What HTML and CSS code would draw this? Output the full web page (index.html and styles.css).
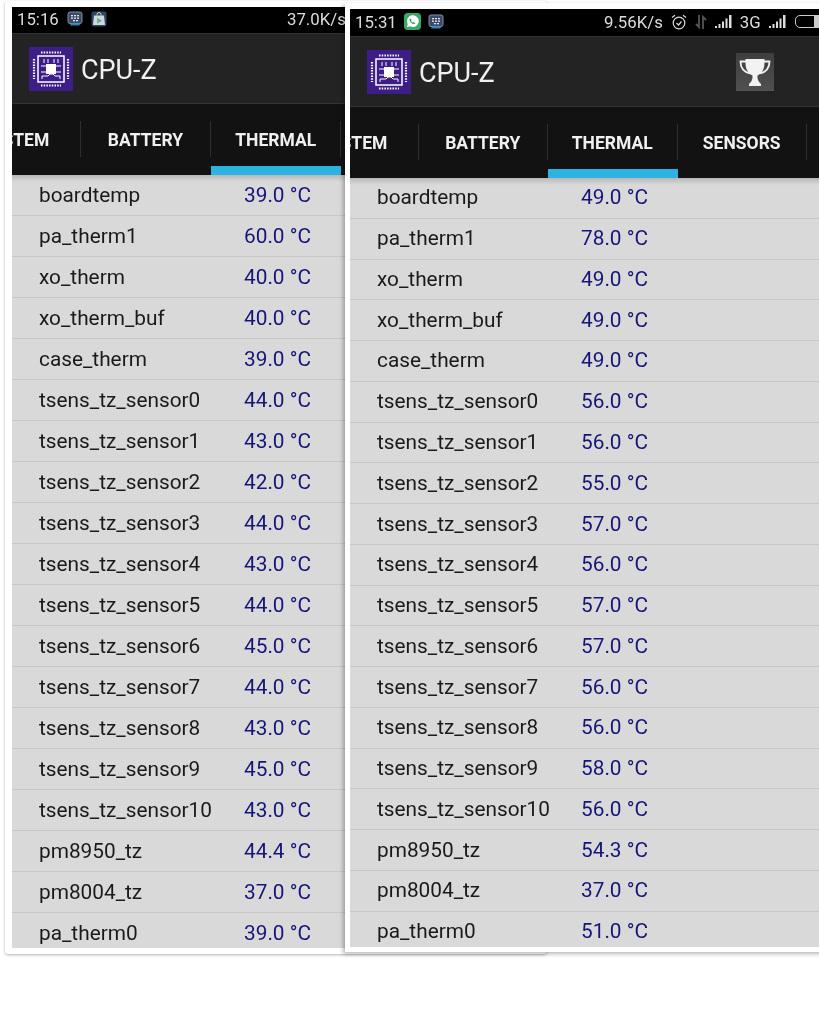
FILE: index.html
```html
<!DOCTYPE html>
<html lang="en">
<head>
<meta charset="utf-8">
<title>CPU-Z thermal comparison</title>
<link rel="stylesheet" href="styles.css">
</head>
<body>
<svg class="defs" width="0" height="0" aria-hidden="true">
  <symbol id="cpu" viewBox="0 0 44 44">
    <rect width="44" height="44" fill="#3c1e86"/>
    <g fill="none" stroke="#fff">
      <rect x="9" y="9" width="26" height="26" stroke-width="1.500"/>
      <path d="M15 16v-4M19 16v-4M25 16v-4M29 16v-4M12 19h5M32 19h-5M12 25h5M32 25h-5M13 32v-3h6l2-2h3l2 2h5v3" stroke-width="1"/>
    </g>
    <rect x="17" y="17" width="10" height="10" fill="#fff"/>
    <g stroke="#fff" stroke-width="2.200" stroke-dasharray="1.500 1.200">
      <path d="M12 5.500h20M12 38.500h20M5 12v20M39 12v20"/>
    </g>
  </symbol>
  <symbol id="bbm" viewBox="0 0 16 16">
    <rect x="1" y="1" width="14" height="11.500" rx="2" fill="#3b4a68" stroke="#7e8fa8"/>
    <path d="M3 14.500h9l2-2H4z" fill="#2e86b8"/>
    <g fill="#e6e6e6"><rect x="4" y="4" width="2" height="1.300"/><rect x="7" y="4" width="2" height="1.300"/><rect x="10" y="4" width="2" height="1.300"/><rect x="4" y="6.500" width="2" height="1.300"/><rect x="7" y="6.500" width="2" height="1.300"/><rect x="10" y="6.500" width="2" height="1.300"/><rect x="6" y="9" width="2" height="1.300"/><rect x="9" y="9" width="2" height="1.300"/></g>
  </symbol>
  <symbol id="play" viewBox="0 0 16 16">
    <rect x="0.500" y="0.500" width="15" height="15" rx="2" fill="#2d4561"/>
    <path d="M3 4.500h10l1 9.500H2z" fill="#cfd8dc"/>
    <path d="M6 4.500V3.500a2 2 0 0 1 4 0v1" fill="none" stroke="#cfd8dc"/>
    <path d="M6 7l5 2.800L6 12.600z" fill="#3aa9c9"/>
    <path d="M6 7l2.800 2.800L6 12.600z" fill="#7cb45a"/>
  </symbol>
  <symbol id="whatsapp" viewBox="0 0 18 18">
    <rect width="18" height="18" rx="4" fill="#3aa868"/>
    <path d="M3 15l1-3.400a6.200 6.200 0 1 1 2.400 2.400z" fill="#fff"/>
    <path d="M6.500 5.500c-1.200 1.200-.6 3 .9 4.600s3.300 2.200 4.600 1l-1.500-1.600-1 .6c-.8-.3-1.700-1.200-2-2l.6-1z" fill="#3aa868"/>
  </symbol>
  <symbol id="alarm" viewBox="0 0 16 16">
    <g fill="none" stroke="#ddd" stroke-width="1.200">
      <circle cx="8" cy="9" r="5.800"/>
      <path d="M5.500 9l2 2 3-3.500M1 3.500l3-2.200M15 3.500l-3-2.200"/>
    </g>
  </symbol>
  <symbol id="arrows" viewBox="0 0 12 16">
    <path d="M4 1v12L1 10M8 15V3l3 3" fill="none" stroke="#555" stroke-width="1.800"/>
  </symbol>
  <symbol id="signal" viewBox="0 0 18 13">
    <g fill="#ddd"><rect x="0" y="11" width="2" height="2"/><rect x="3.500" y="9" width="2" height="4"/><rect x="7" y="6.500" width="2" height="6.500"/><rect x="10.500" y="3.500" width="2" height="9.500"/><rect x="14" y="0" width="2.500" height="13"/></g>
  </symbol>
  <symbol id="trophy" viewBox="0 0 38 38">
    <path d="M9.500 6h19v4c0 7-3.500 11-7 12.500-.3 3 .5 6 3.500 8.500v2H13v-2c3-2.500 3.800-5.500 3.500-8.500C13 21 9.500 17 9.500 10z" fill="#f2f2f2"/>
    <path d="M10 8.500H4.500c0 6.500 3.500 10.500 9.500 12M28 8.500h5.500c0 6.500-3.500 10.500-9.500 12" fill="none" stroke="#f2f2f2" stroke-width="1.800"/>
  </symbol>
</svg>
<main class="stage">
  <section class="window window-left">
    <div class="screen">
      <div class="status">
        <span class="clock">15:16</span>
        <svg class="note"><use href="#bbm"/></svg>
        <svg class="note"><use href="#play"/></svg>
        <span class="speed">37.0K/s</span>
      </div>
      <div class="appbar">
        <svg class="logo"><use href="#cpu"/></svg>
        <h1 class="title">CPU-Z</h1>
      </div>
      <nav class="tabs">
        <div class="tab">SYSTEM</div>
        <div class="tab">BATTERY</div>
        <div class="tab tab-on">THERMAL</div>
      </nav>
      <div class="list">
        <div class="row"><span class="name">boardtemp</span><span class="value">39.0 °C</span></div>
        <div class="row"><span class="name">pa_therm1</span><span class="value">60.0 °C</span></div>
        <div class="row"><span class="name">xo_therm</span><span class="value">40.0 °C</span></div>
        <div class="row"><span class="name">xo_therm_buf</span><span class="value">40.0 °C</span></div>
        <div class="row"><span class="name">case_therm</span><span class="value">39.0 °C</span></div>
        <div class="row"><span class="name">tsens_tz_sensor0</span><span class="value">44.0 °C</span></div>
        <div class="row"><span class="name">tsens_tz_sensor1</span><span class="value">43.0 °C</span></div>
        <div class="row"><span class="name">tsens_tz_sensor2</span><span class="value">42.0 °C</span></div>
        <div class="row"><span class="name">tsens_tz_sensor3</span><span class="value">44.0 °C</span></div>
        <div class="row"><span class="name">tsens_tz_sensor4</span><span class="value">43.0 °C</span></div>
        <div class="row"><span class="name">tsens_tz_sensor5</span><span class="value">44.0 °C</span></div>
        <div class="row"><span class="name">tsens_tz_sensor6</span><span class="value">45.0 °C</span></div>
        <div class="row"><span class="name">tsens_tz_sensor7</span><span class="value">44.0 °C</span></div>
        <div class="row"><span class="name">tsens_tz_sensor8</span><span class="value">43.0 °C</span></div>
        <div class="row"><span class="name">tsens_tz_sensor9</span><span class="value">45.0 °C</span></div>
        <div class="row"><span class="name">tsens_tz_sensor10</span><span class="value">43.0 °C</span></div>
        <div class="row"><span class="name">pm8950_tz</span><span class="value">44.4 °C</span></div>
        <div class="row"><span class="name">pm8004_tz</span><span class="value">37.0 °C</span></div>
        <div class="row"><span class="name">pa_therm0</span><span class="value">39.0 °C</span></div>
      </div>
    </div>
  </section>
  <section class="window window-right">
    <div class="screen">
      <div class="status">
        <span class="clock">15:31</span>
        <svg class="note note-wa"><use href="#whatsapp"/></svg>
        <svg class="note note-tight"><use href="#bbm"/></svg>
        <span class="speed">9.56K/s</span>
        <svg class="ind ind-alarm"><use href="#alarm"/></svg>
        <svg class="ind ind-arrows"><use href="#arrows"/></svg>
        <svg class="ind ind-signal"><use href="#signal"/></svg>
        <span class="net">3G</span>
        <svg class="ind ind-signal ind-signal-2"><use href="#signal"/></svg>
        <span class="battery"></span>
      </div>
      <div class="appbar">
        <svg class="logo"><use href="#cpu"/></svg>
        <h1 class="title">CPU-Z</h1>
        <span class="trophy-tile"><svg class="trophy"><use href="#trophy"/></svg></span>
      </div>
      <nav class="tabs">
        <div class="tab">SYSTEM</div>
        <div class="tab">BATTERY</div>
        <div class="tab tab-on">THERMAL</div>
        <div class="tab">SENSORS</div>
      </nav>
      <div class="list">
        <div class="row"><span class="name">boardtemp</span><span class="value">49.0 °C</span></div>
        <div class="row"><span class="name">pa_therm1</span><span class="value">78.0 °C</span></div>
        <div class="row"><span class="name">xo_therm</span><span class="value">49.0 °C</span></div>
        <div class="row"><span class="name">xo_therm_buf</span><span class="value">49.0 °C</span></div>
        <div class="row"><span class="name">case_therm</span><span class="value">49.0 °C</span></div>
        <div class="row"><span class="name">tsens_tz_sensor0</span><span class="value">56.0 °C</span></div>
        <div class="row"><span class="name">tsens_tz_sensor1</span><span class="value">56.0 °C</span></div>
        <div class="row"><span class="name">tsens_tz_sensor2</span><span class="value">55.0 °C</span></div>
        <div class="row"><span class="name">tsens_tz_sensor3</span><span class="value">57.0 °C</span></div>
        <div class="row"><span class="name">tsens_tz_sensor4</span><span class="value">56.0 °C</span></div>
        <div class="row"><span class="name">tsens_tz_sensor5</span><span class="value">57.0 °C</span></div>
        <div class="row"><span class="name">tsens_tz_sensor6</span><span class="value">57.0 °C</span></div>
        <div class="row"><span class="name">tsens_tz_sensor7</span><span class="value">56.0 °C</span></div>
        <div class="row"><span class="name">tsens_tz_sensor8</span><span class="value">56.0 °C</span></div>
        <div class="row"><span class="name">tsens_tz_sensor9</span><span class="value">58.0 °C</span></div>
        <div class="row"><span class="name">tsens_tz_sensor10</span><span class="value">56.0 °C</span></div>
        <div class="row"><span class="name">pm8950_tz</span><span class="value">54.3 °C</span></div>
        <div class="row"><span class="name">pm8004_tz</span><span class="value">37.0 °C</span></div>
        <div class="row"><span class="name">pa_therm0</span><span class="value">51.0 °C</span></div>
      </div>
    </div>
  </section>
</main>
</body>
</html>
```
FILE: styles.css
```css
* { box-sizing: border-box; }
html, body { margin: 0; padding: 0; background: #fff; }
.defs { position: absolute; }
.stage {
  position: relative;
  width: 819px;
  height: 1024px;
  overflow: hidden;
  background: #fff;
  font-family: Roboto, "Liberation Sans", sans-serif;
  filter: blur(0.35px);
}

/* the two photographed phone screens sit on a free canvas */
.window { position: absolute; background: #fff; }
.window-left {
  left: 5px;
  top: 1px;
  width: 542px;
  height: 953px;
  padding: 6px 0 0 7px;
  box-shadow: 0 1px 3px rgba(0,0,0,.3);
  border-radius: 3px;
  --status: 26px;
  --row: 41px;
  --shift: -61.5px;
  --tab: 130.3px;
  --name: 205px;
  --screen: 333px;
  --clip: 941px;
  --speed-gap: 180px;
}
.window-right {
  left: 345px;
  top: 3px;
  width: 480px;
  height: 949px;
  padding: 6px 0 0 5px;
  box-shadow: -2px 2px 4px rgba(0,0,0,.28);
  --status: 27px;
  --row: 40.78px;
  --shift: -61px;
  --tab: 129.5px;
  --name: 204px;
  --screen: 475px;
  --clip: 938px;
  --speed-gap: 160px;
}

.screen {
  width: var(--screen);
  height: var(--clip);
  overflow: hidden;
  background: #d9d9d9;
  display: flex;
  flex-direction: column;
}

.status {
  flex: none;
  height: var(--status);
  background: #000;
  color: #ddd;
  display: flex;
  align-items: center;
  padding: 0 0 2px 5px;
  font-size: 16.8px;
  white-space: nowrap;
}
.clock { width: 42px; flex: none; }
.note { width: 16px; height: 16px; flex: none; margin-left: 8px; }
.note-wa { width: 17px; height: 17px; margin-left: 7px; }
.note-tight { margin-left: 7px; }
.speed { flex: none; margin-left: var(--speed-gap); }
.ind { flex: none; }
.ind-alarm { width: 16px; height: 16px; margin-left: 8px; }
.ind-arrows { width: 12px; height: 16px; margin-left: 8px; }
.ind-signal { width: 18px; height: 13px; margin-left: 8px; }
.ind-signal-2 { margin-left: 8px; }
.net { flex: none; margin-left: 7px; }
.battery {
  flex: none;
  width: 40px;
  height: 13px;
  margin-left: 8px;
  border: 1.5px solid #ccc;
  border-radius: 5px;
  background: linear-gradient(90deg, #000 18px, #ccc 18px);
}

.appbar {
  flex: none;
  height: 71px;
  background: #232323;
  border-top: 1px solid #333;
  border-bottom: 1px solid #333;
  display: flex;
  align-items: center;
  padding-left: 17px;
}
.logo { width: 44px; height: 44px; flex: none; }
.title {
  flex: none;
  width: 74px;
  margin: 2px 0 0 8px;
  font-size: 27px;
  font-weight: 400;
  white-space: nowrap;
  color: #f0f0f0;
}
.trophy-tile {
  flex: none;
  margin-left: 243px;
  width: 38px;
  height: 38px;
  background: linear-gradient(#3e3e3e, #505050);
  display: flex;
}
.trophy { width: 38px; height: 38px; }

.tabs {
  flex: none;
  height: 71px;
  background: #121212;
  display: flex;
  margin-left: var(--shift);
}
.tab {
  flex: none;
  width: var(--tab);
  height: 100%;
  display: flex;
  align-items: center;
  justify-content: center;
  padding: 1px 1px 0 0;
  color: #f0f0f0;
  font-size: 17.5px;
  font-weight: 700;
  background: linear-gradient(#2e2e2e, #2e2e2e) right 17px / 1px 36px no-repeat;
}
.tab-on {
  box-shadow: inset 0 -9px 0 #2db3e2;
}

.list {
  flex: 1;
  background: linear-gradient(#b8b8b8, #d9d9d9 7px) top / 100% 7px no-repeat #d9d9d9;
}
.row {
  height: var(--row);
  display: flex;
  align-items: center;
  padding: 0 0 1px 27px;
  border-bottom: 1px solid #c6c6c6;
  font-size: 20.8px;
  white-space: nowrap;
}
.name { flex: none; width: var(--name); color: #1a1a1a; }
.value { flex: none; color: #15157a; }
```
